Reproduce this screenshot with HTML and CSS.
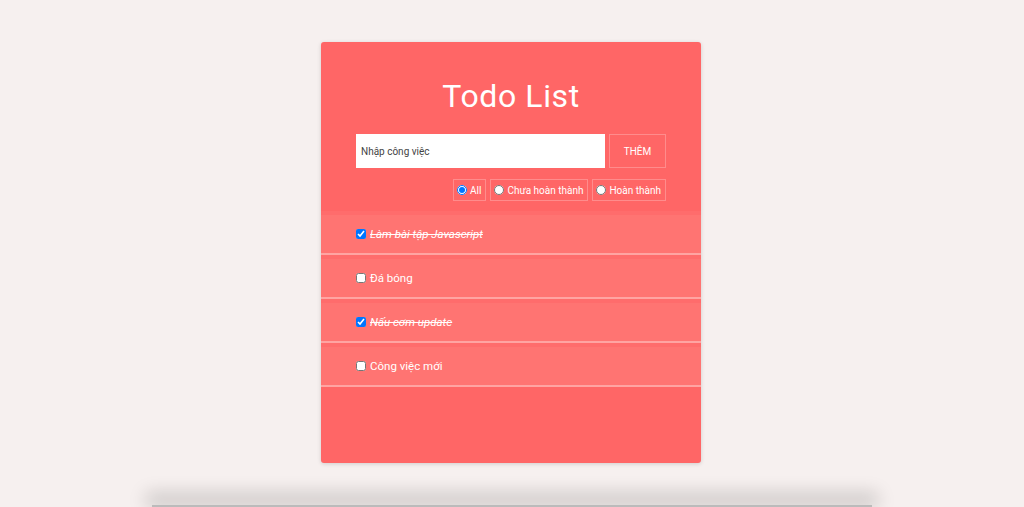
FILE: index.html
```html
<!DOCTYPE html>
<html lang="vi">
<head>
    <meta charset="UTF-8">
    <meta name="viewport" content="width=device-width, initial-scale=1.0">
    <title>Todo List</title>
    <link rel="stylesheet" href="styles.css">
</head>
<body>
    <div class="page">
        <div class="todo-card">
            <h1>Todo List</h1>
            <div class="add-form">
                <input type="text" class="todo-input" placeholder="Nhập công việc">
                <button class="add-btn">THÊM</button>
            </div>
            <div class="filters">
                <label class="filter"><input type="radio" name="filter" checked> All</label>
                <label class="filter"><input type="radio" name="filter"> Chưa hoàn thành</label>
                <label class="filter"><input type="radio" name="filter"> Hoàn thành</label>
            </div>
            <ul class="todo-list">
                <li class="todo-item done"><input type="checkbox" checked><span>Làm bài tập Javascript</span></li>
                <li class="todo-item"><input type="checkbox"><span>Đá bóng</span></li>
                <li class="todo-item done"><input type="checkbox" checked><span>Nấu cơm update</span></li>
                <li class="todo-item"><input type="checkbox"><span>Công việc mới</span></li>
            </ul>
        </div>
        <div class="dock-shadow"></div>
    </div>
</body>
</html>
```

FILE: styles.css
```css
html, body {
    margin: 0;
    height: 100%;
}
body {
    font-family: Roboto, "Noto Sans", Arial, sans-serif;
    background-color: #f6f0ef;
    overflow: hidden;
}
.page {
    height: 100%;
    display: flex;
    flex-direction: column;
    align-items: center;
    padding-top: 42px;
    box-sizing: border-box;
}
.todo-card {
    width: 380px;
    height: 421px;
    margin-left: -2px;
    background-color: #ff6666;
    border-radius: 3px;
    box-shadow: 0 1px 4px rgba(0, 0, 0, 0.15);
}
.todo-card h1 {
    margin: 36px 0 0;
    text-align: center;
    color: #fff;
    font-weight: 400;
    font-size: 32px;
    letter-spacing: 0.6px;
    line-height: 36px;
}
.add-form {
    display: flex;
    margin: 20px 35px 0;
    gap: 4px;
}
.todo-input {
    width: 249px;
    height: 34px;
    box-sizing: border-box;
    border: none;
    padding: 0 5px;
    font-family: Roboto, Arial, sans-serif;
    font-size: 10px;
    outline: none;
}
.todo-input::placeholder {
    color: #444;
}
.add-btn {
    width: 57px;
    height: 34px;
    background: transparent;
    border: 1px solid rgba(255, 255, 255, 0.25);
    color: #fff;
    font-family: Roboto, Arial, sans-serif;
    font-size: 10px;
    cursor: pointer;
}
.filters {
    display: flex;
    justify-content: flex-end;
    gap: 4px;
    margin: 11px 35px 0;
}
.filter {
    display: flex;
    align-items: center;
    height: 22px;
    box-sizing: border-box;
    padding: 0 4px 0 3px;
    border: 1px solid rgba(255, 255, 255, 0.25);
    color: #fff;
    font-size: 10px;
}
.filter input {
    margin: 0 3px 0 0;
    width: 10px;
    height: 10px;
}
.todo-list {
    list-style: none;
    margin: 10px 0 0;
    padding: 0;
}
.todo-item {
    display: flex;
    align-items: center;
    height: 44px;
    box-sizing: border-box;
    padding: 0 35px;
    background-color: #ff7472;
    border-top: 4px solid #ff6c6c;
    border-bottom: 2px solid #ffa4a2;
    color: #fff;
    font-size: 11.5px;
}
.todo-item input {
    margin: 0 4px 0 0;
    width: 10px;
    height: 10px;
}
.todo-item.done span {
    font-style: italic;
    text-decoration: line-through;
}
.dock-shadow {
    margin-top: auto;
    width: 720px;
    height: 2px;
    box-shadow: 0 -6px 18px 6px rgba(0, 0, 0, 0.18);
    background: #bbb;
}
```
